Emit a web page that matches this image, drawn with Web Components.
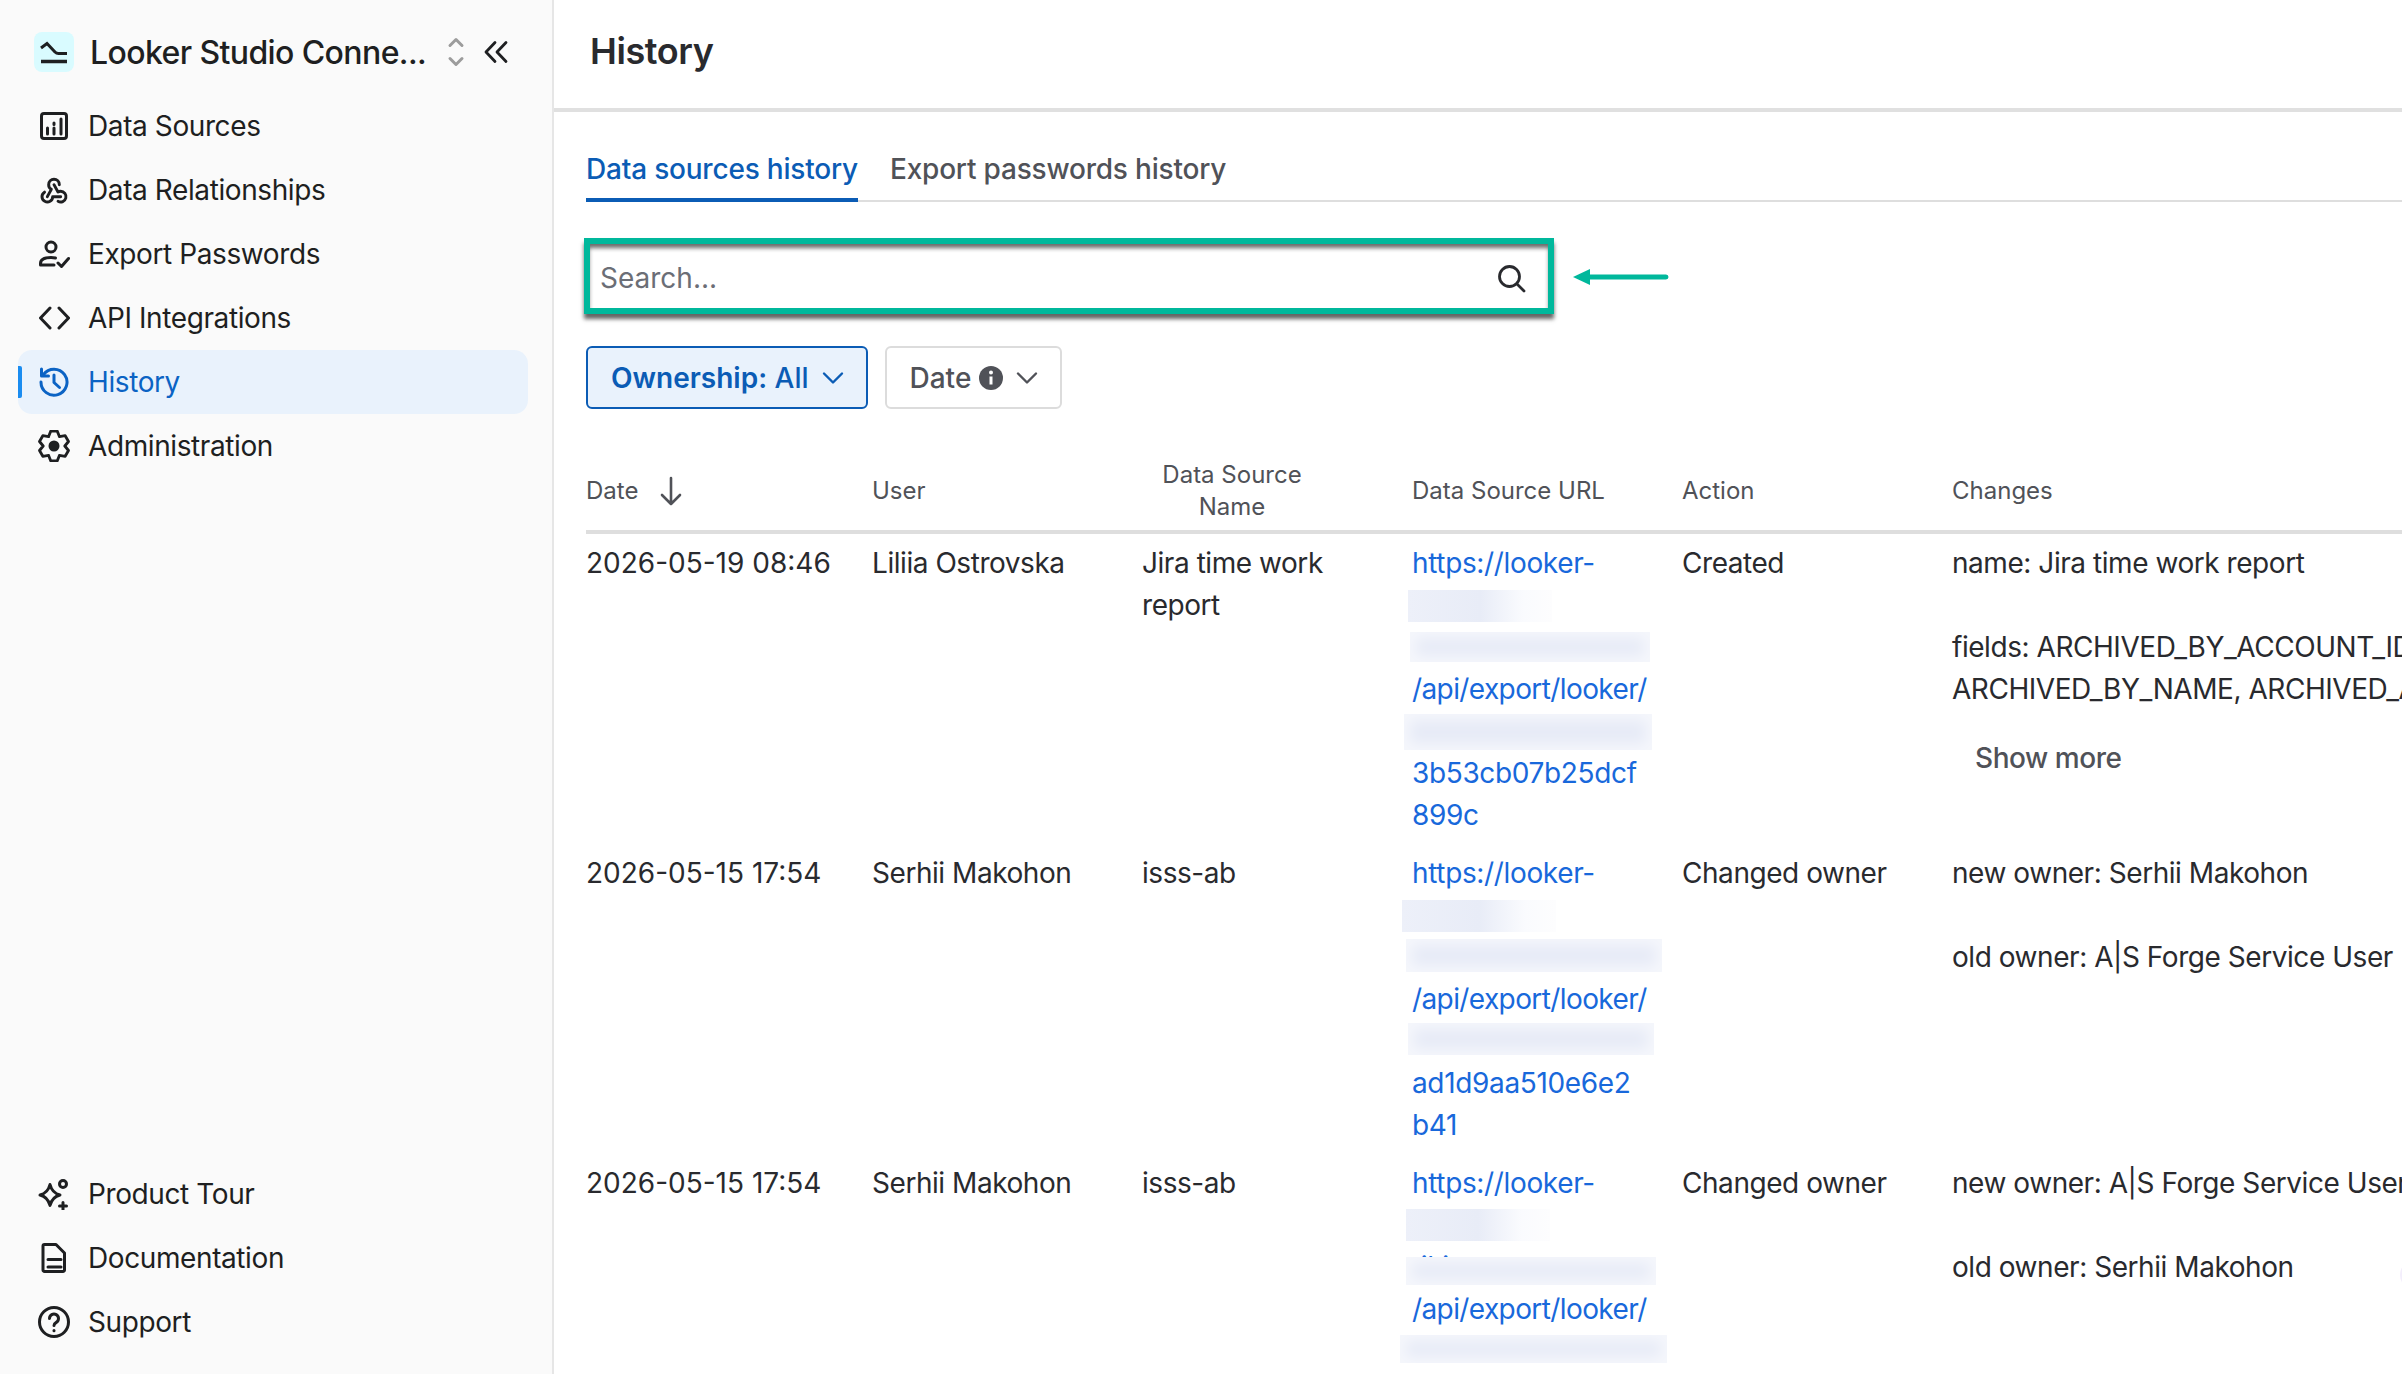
<!DOCTYPE html>
<html lang="en">
<head>
<meta charset="utf-8">
<title>History</title>
<style>
  html, body { margin: 0; height: 100%; overflow: hidden; background: #fff; }
  body { font-family: Inter, "Liberation Sans", sans-serif; color: #292A2E; }
</style>
</head>
<body>
<app-shell>
  <side-nav slot="side">
    <nav-item slot="top" icon="sources">Data Sources</nav-item>
    <nav-item slot="top" icon="webhook">Data Relationships</nav-item>
    <nav-item slot="top" icon="usercheck">Export Passwords</nav-item>
    <nav-item slot="top" icon="code">API Integrations</nav-item>
    <nav-item slot="top" icon="history" active>History</nav-item>
    <nav-item slot="top" icon="gear">Administration</nav-item>
    <nav-item slot="bottom" icon="sparkle">Product Tour</nav-item>
    <nav-item slot="bottom" icon="doc">Documentation</nav-item>
    <nav-item slot="bottom" icon="help">Support</nav-item>
  </side-nav>
  <page-header>History</page-header>
  <tab-bar>
    <tab-item active>Data sources history</tab-item>
    <tab-item>Export passwords history</tab-item>
  </tab-bar>
  <search-box placeholder="Search..."></search-box>
  <filter-bar>
    <filter-button active><b>Ownership:</b>&nbsp;All</filter-button>
    <filter-button info>Date</filter-button>
  </filter-bar>
  <history-table>
    <history-row>
      <span class="date">2026-05-19 08:46</span>
      <span>Liliia Ostrovska</span>
      <span>Jira time work report</span>
      <url-cell lines="https://looker-|||/api/export/looker/||3b53cb07b25dcf|899c"
                patches="-4,48,144,32,f;-2,90,240,30;-8,172,248,36"></url-cell>
      <span>Created</span>
      <change-list more>
        <p>name: Jira time work report</p>
        <p>fields: ARCHIVED_BY_ACCOUNT_ID,<br>ARCHIVED_BY_NAME, ARCHIVED_AT,</p>
      </change-list>
    </history-row>
    <history-row>
      <span class="date">2026-05-15 17:54</span>
      <span>Serhii Makohon</span>
      <span>isss-ab</span>
      <url-cell lines="https://looker-|||/api/export/looker/||ad1d9aa510e6e2|b41"
                patches="-10,48,154,32,f;-6,87,256,33;-4,171,246,32"></url-cell>
      <span>Changed owner</span>
      <change-list>
        <p>new owner: Serhii Makohon</p>
        <p>old owner: A|S Forge Service User</p>
      </change-list>
    </history-row>
    <history-row>
      <span class="date">2026-05-15 17:54</span>
      <span>Serhii Makohon</span>
      <span>isss-ab</span>
      <url-cell lines="https://looker-||tiki|/api/export/looker/|"
                patches="-6,47,144,32,f;-6,95,250,28;-12,173,267,28"></url-cell>
      <span>Changed owner</span>
      <change-list>
        <p>new owner: A|S Forge Service User</p>
        <p>old owner: Serhii Makohon</p>
      </change-list>
    </history-row>
  </history-table>
</app-shell>

<script>
// six tooth gear outline, used by the Administration item
function gearPath() {
  const pts = [];
  for (let i = 0; i < 6; i++) {
    const a = -Math.PI / 2 + i * Math.PI / 3;
    [[-0.52, 10.8], [-0.22, 15.2], [0.22, 15.2], [0.52, 10.8]].forEach(([d, r]) => {
      pts.push((16 + r * Math.cos(a + d)).toFixed(1) + ' ' + (16 + r * Math.sin(a + d)).toFixed(1));
    });
  }
  return 'M' + pts.join('L') + 'Z';
}

const ICONS = {
  sources: '<rect x="3.5" y="3.5" width="25" height="25" rx="2.5"/><path d="M9.5 24v-6M16 24v-6M16 14.5v-1.5M23 24V9"/>',
  webhook: '<g transform="scale(1.333)" stroke-width="2.2"><path d="M4.876 13.61a4 4 0 1 0 6.124 3.39h6"/><path d="M15.066 20.502a4 4 0 1 0 1.934 -7.502c-.706 0 -1.424 .179 -2 .5l-3 -5.5"/><path d="M16 8a4 4 0 1 0 -8 0c0 1.506 .77 2.818 2 3.5l-3 5.5"/></g>',
  usercheck: '<circle cx="13" cy="9" r="5"/><path d="M2.5 27v-1.5c0-4 4-6 10.500-6 1.500 0 3 .2 4.500.5M2.500 27H16"/><path d="M20 25l3.500 3.500 7-8"/>',
  code: '<path d="M12 6L2.500 16 12 26M21 6l9.500 10L21 26"/>',
  history: '<path d="M5.500 8.500A13 13 0 1 1 3 16"/><path d="M3.500 3v7h7"/><path d="M16 9v7.500l5.500 5"/>',
  gear: '<path d="' + gearPath() + '" stroke-width="2.800"/><circle cx="16" cy="16" r="5.500" fill="currentColor" stroke="none"/>',
  sparkle: '<path d="M12 6.500c1.500 6 4 9 10 10.500-6 1.500-8.500 4.500-10 10.500C10.500 21.500 8 18.500 2 17c6-1.500 8.500-4.500 10-10.500z"/><circle cx="25" cy="6" r="3.500"/><path d="M25 24.500v7M21.500 28h7"/>',
  doc: '<path d="M6.500 2.500H18l8.500 8.500v17a1.500 1.500 0 0 1-1.500 1.500H6.500A1.500 1.500 0 0 1 5 28V4a1.500 1.500 0 0 1 1.500-1.500z"/><path d="M10 17.500h13M10 25h13"/>',
  help: '<circle cx="16" cy="16" r="14.500"/><path d="M11.500 12.500a4.500 4.500 0 1 1 6.800 3.900c-1.500.9-2.300 1.700-2.300 3.100"/><path d="M16 24.500v.3"/>'
};

class AppShell extends HTMLElement {
  constructor() {
    super();
    this.attachShadow({ mode: 'open' }).innerHTML = `
      <style>
        :host { display: grid; grid-template-columns: 554px 1fr; height: 1374px; overflow: hidden; position: relative; }
        main { min-width: 0; overflow: hidden; }
        .floater { position: absolute; right: -28px; top: 1260px; width: 30px; height: 30px; border-radius: 50%; background: #F3EEFC; }
      </style>
      <slot name="side"></slot>
      <main><slot></slot></main>
      <div class="floater"></div>
    `;
  }
}

class SideNav extends HTMLElement {
  constructor() {
    super();
    this.attachShadow({ mode: 'open' }).innerHTML = `
      <style>
        :host { display: flex; flex-direction: column; box-sizing: border-box; height: 1374px; background: #FAFAFA; border-right: 2px solid #E6E6E6; padding: 32px 24px 20px 18px; }
        .brand { display: flex; align-items: center; height: 40px; padding-left: 16px; margin-bottom: 22px; }
        .logo { width: 40px; height: 40px; border-radius: 8px; background: #D9FBFF; flex: none; }
        .name { font-size: 32px; font-weight: 500; color: #1E1F21; margin-left: 16px; white-space: nowrap; width: 356px; letter-spacing: -0.6px; }
        .updown { flex: none; }
        .collapse { margin-left: 17px; flex: none; }
        svg { display: block; }
        .spacer { flex: 1; }
      </style>
      <div class="brand">
        <svg class="logo" viewBox="0 0 40 40" fill="none" stroke="#1E1F21" stroke-width="3"><path d="M7 16l6-4.500 8 8.500q1.500 1.500 3.500 1.500H33"/><path d="M7 29.500h26" stroke-width="3.500"/></svg>
        <span class="name">Looker Studio Conne...</span>
        <svg class="updown" width="20" height="32" viewBox="0 0 20 32" fill="none" stroke="#9C9C9C" stroke-width="3" stroke-linecap="round" stroke-linejoin="round"><path d="M4 9.500L10 3.500l6 6M4 22.500l6 6 6-6"/></svg>
        <svg class="collapse" width="26" height="24" viewBox="0 0 26 24" fill="none" stroke="#1E1F21" stroke-width="2.800" stroke-linecap="round" stroke-linejoin="round"><path d="M12 2.500L3 12l9 9.500M23 2.500L14 12l9 9.500"/></svg>
      </div>
      <slot name="top"></slot>
      <div class="spacer"></div>
      <slot name="bottom"></slot>
    `;
  }
}

class NavItem extends HTMLElement {
  connectedCallback() {
    const icon = ICONS[this.getAttribute('icon')] || '';
    this.attachShadow({ mode: 'open' }).innerHTML = `
      <style>
        :host { display: flex; align-items: center; position: relative; box-sizing: border-box; height: 64px; padding-left: 20px; gap: 18px; font-size: 28px; letter-spacing: -0.4px; color: #1E1F21; border-radius: 14px; white-space: nowrap; }
        :host([active]) { background: #E9F2FC; color: #0B63C4; }
        .bar { display: none; }
        :host([active]) .bar { display: block; position: absolute; left: 0; top: 16px; width: 4px; height: 32px; background: #1A8CF0; border-radius: 0 2px 2px 0; }
        svg { width: 32px; height: 32px; flex: none; fill: none; stroke: currentColor; stroke-width: 3; stroke-linecap: round; stroke-linejoin: round; }
      </style>
      <span class="bar"></span>
      <svg viewBox="0 0 32 32">${icon}</svg>
      <slot></slot>
    `;
  }
}

class PageHeader extends HTMLElement {
  constructor() {
    super();
    this.attachShadow({ mode: 'open' }).innerHTML = `
      <style>
        :host { display: flex; align-items: center; box-sizing: border-box; height: 112px; padding: 0 0 6px 36px; border-bottom: 4px solid #E0E0E0; font-size: 36px; font-weight: 600; letter-spacing: -0.4px; color: #292A2E; }
      </style>
      <slot></slot>
    `;
  }
}

class TabBar extends HTMLElement {
  constructor() {
    super();
    this.attachShadow({ mode: 'open' }).innerHTML = `
      <style>
        :host { display: flex; gap: 32px; height: 90px; margin-left: 32px; box-sizing: border-box; border-bottom: 2px solid #DEDEDE; align-items: flex-end; }
      </style>
      <slot></slot>
    `;
  }
}

class TabItem extends HTMLElement {
  constructor() {
    super();
    this.attachShadow({ mode: 'open' }).innerHTML = `
      <style>
        :host { display: block; box-sizing: border-box; height: 62px; margin-bottom: -2px; font-size: 28px; font-weight: 500; line-height: 40px; padding-top: 9px; letter-spacing: -0.2px; color: #505258; white-space: nowrap; border-bottom: 4px solid transparent; }
        :host([active]) { color: #0B5CB5; border-bottom-color: #0B5CB5; }
      </style>
      <slot></slot>
    `;
  }
}

class SearchBox extends HTMLElement {
  connectedCallback() {
    this.attachShadow({ mode: 'open' }).innerHTML = `
      <style>
        :host { display: flex; align-items: center; gap: 19px; margin: 36px 0 0 30px; }
        .box { display: flex; align-items: center; box-sizing: border-box; width: 970px; height: 76px; border: 6px solid #00B89C; background: #fff; padding: 3px 22px 0 10px; box-shadow: 0 5px 4px rgba(50,50,50,.75), inset 0 5px 4px -1px rgba(50,50,50,.72); }
        .ph { flex: 1; font-size: 28px; color: #6B6E76; }
        svg { display: block; flex: none; }
        .arrow { margin-top: 2px; }
      </style>
      <div class="box">
        <span class="ph">${this.getAttribute('placeholder')}</span>
        <svg width="30" height="30" viewBox="0 0 30 30" fill="none" stroke="#292A2E" stroke-width="2.800" stroke-linecap="round"><circle cx="13.500" cy="13.500" r="10"/><path d="M21 21l7 7"/></svg>
      </div>
      <svg class="arrow" width="96" height="18" viewBox="0 0 96 18"><path d="M0 9L17 1v5.500h76a2.500 2.500 0 0 1 0 5H17V17z" fill="#00B89C"/></svg>
    `;
  }
}

class FilterBar extends HTMLElement {
  constructor() {
    super();
    this.attachShadow({ mode: 'open' }).innerHTML = `
      <style>
        :host { display: flex; gap: 17px; margin: 32px 0 0 32px; }
      </style>
      <slot></slot>
    `;
  }
}

class FilterButton extends HTMLElement {
  connectedCallback() {
    const info = this.hasAttribute('info')
      ? '<svg class="info" width="24" height="24" viewBox="0 0 24 24"><circle cx="12" cy="12" r="12" fill="#505258"/><circle cx="12" cy="6.500" r="2" fill="#fff"/><path d="M10.500 10.500h3v8h-3z" fill="#fff"/></svg>'
      : '';
    this.attachShadow({ mode: 'open' }).innerHTML = `
      <style>
        :host { display: inline-flex; align-items: center; box-sizing: border-box; height: 63px; padding: 0 22px 0 23px; border: 2px solid #DCDCDC; border-radius: 6px; background: #fff; font-size: 28px; font-weight: 500; color: #505258; white-space: nowrap; }
        :host([active]) { border-color: #0B5CB5; background: #E9F2FC; color: #0B5CB5; }
        ::slotted(b) { font-weight: 600; }
        .info { margin-left: 8px; }
        .chev { margin-left: 13px; }
        svg { display: block; flex: none; }
      </style>
      <slot></slot>${info}
      <svg class="chev" width="22" height="14" viewBox="0 0 22 14" fill="none" stroke="currentColor" stroke-width="2.400" stroke-linecap="round" stroke-linejoin="round"><path d="M2 2.500l9 9 9-9"/></svg>
    `;
  }
}

class HistoryTable extends HTMLElement {
  constructor() {
    super();
    this.attachShadow({ mode: 'open' }).innerHTML = `
      <style>
        :host { display: block; margin: 41px 0 0 32px; width: 1900px; }
        .head { display: grid; grid-template-columns: 286px 270px 270px 270px 270px 1fr; align-items: center; box-sizing: border-box; height: 84px; padding-top: 2px; border-bottom: 4px solid #DEDEDE; font-size: 24px; line-height: 32px; color: #505258; }
        .head span { white-space: nowrap; }
        .sort { display: inline-flex; align-items: center; gap: 20px; }
        .two { width: 180px; text-align: center; white-space: normal !important; }
        svg { display: block; }
      </style>
      <div class="head">
        <span class="sort">Date
          <svg width="26" height="30" viewBox="0 0 26 30" fill="none" stroke="#505258" stroke-width="2.600" stroke-linecap="round" stroke-linejoin="round"><path d="M13 2v26M4 19l9 9 9-9"/></svg>
        </span>
        <span>User</span>
        <span class="two">Data Source Name</span>
        <span>Data Source URL</span>
        <span>Action</span>
        <span>Changes</span>
      </div>
      <slot></slot>
    `;
  }
}

class HistoryRow extends HTMLElement {
  constructor() {
    super();
    this.attachShadow({ mode: 'open' }).innerHTML = `
      <style>
        :host { display: grid; grid-template-columns: 286px 270px 270px 270px 270px 1fr; align-items: start; box-sizing: border-box; height: 310px; padding-top: 8px; font-size: 28px; line-height: 42px; letter-spacing: -0.45px; color: #292A2E; }
        ::slotted(span) { padding-right: 40px; }
        ::slotted(.date) { padding-right: 0; white-space: nowrap; letter-spacing: 0; }
      </style>
      <slot></slot>
    `;
  }
}

// link text broken over fixed lines, with the redacted patches laid on top
class UrlCell extends HTMLElement {
  connectedCallback() {
    const lines = this.getAttribute('lines').split('|')
      .map(t => `<div class="line ${t.startsWith('/') ? 'path' : ''}">${t || '&nbsp;'}</div>`).join('');
    const patches = this.getAttribute('patches').split(';').map(p => {
      const [l, t, w, h, fade] = p.split(',');
      return `<div class="patch ${fade ? 'fade' : ''}" style="left:${l}px;top:${t}px;width:${w}px;height:${h}px"></div>`;
    }).join('');
    this.attachShadow({ mode: 'open' }).innerHTML = `
      <style>
        :host { display: block; position: relative; color: #1868DB; font-size: 28px; line-height: 42px; letter-spacing: -0.35px; }
        .line { height: 42px; white-space: nowrap; }
        .line.path { letter-spacing: -0.6px; }
        .patch { position: absolute; background: #E7EBF7; box-shadow: inset 0 0 14px 6px rgba(255,255,255,.6); }
        .patch.fade { background: linear-gradient(90deg, #EDF0F9, #E8ECF7 50%, #FAFBFE 80%, #FDFDFE); box-shadow: none; }
      </style>
      ${lines}${patches}
    `;
  }
}

class ChangeList extends HTMLElement {
  connectedCallback() {
    const more = this.hasAttribute('more') ? '<div class="more">Show more</div>' : '';
    this.attachShadow({ mode: 'open' }).innerHTML = `
      <style>
        :host { display: block; white-space: nowrap; }
        ::slotted(p) { margin: 0 0 42px; }
        .more { margin-top: -15px; padding-left: 23px; font-weight: 500; color: #505258; }
      </style>
      <slot></slot>${more}
    `;
  }
}

customElements.define('app-shell', AppShell);
customElements.define('side-nav', SideNav);
customElements.define('nav-item', NavItem);
customElements.define('page-header', PageHeader);
customElements.define('tab-bar', TabBar);
customElements.define('tab-item', TabItem);
customElements.define('search-box', SearchBox);
customElements.define('filter-bar', FilterBar);
customElements.define('filter-button', FilterButton);
customElements.define('history-table', HistoryTable);
customElements.define('history-row', HistoryRow);
customElements.define('url-cell', UrlCell);
customElements.define('change-list', ChangeList);
</script>
</body>
</html>
